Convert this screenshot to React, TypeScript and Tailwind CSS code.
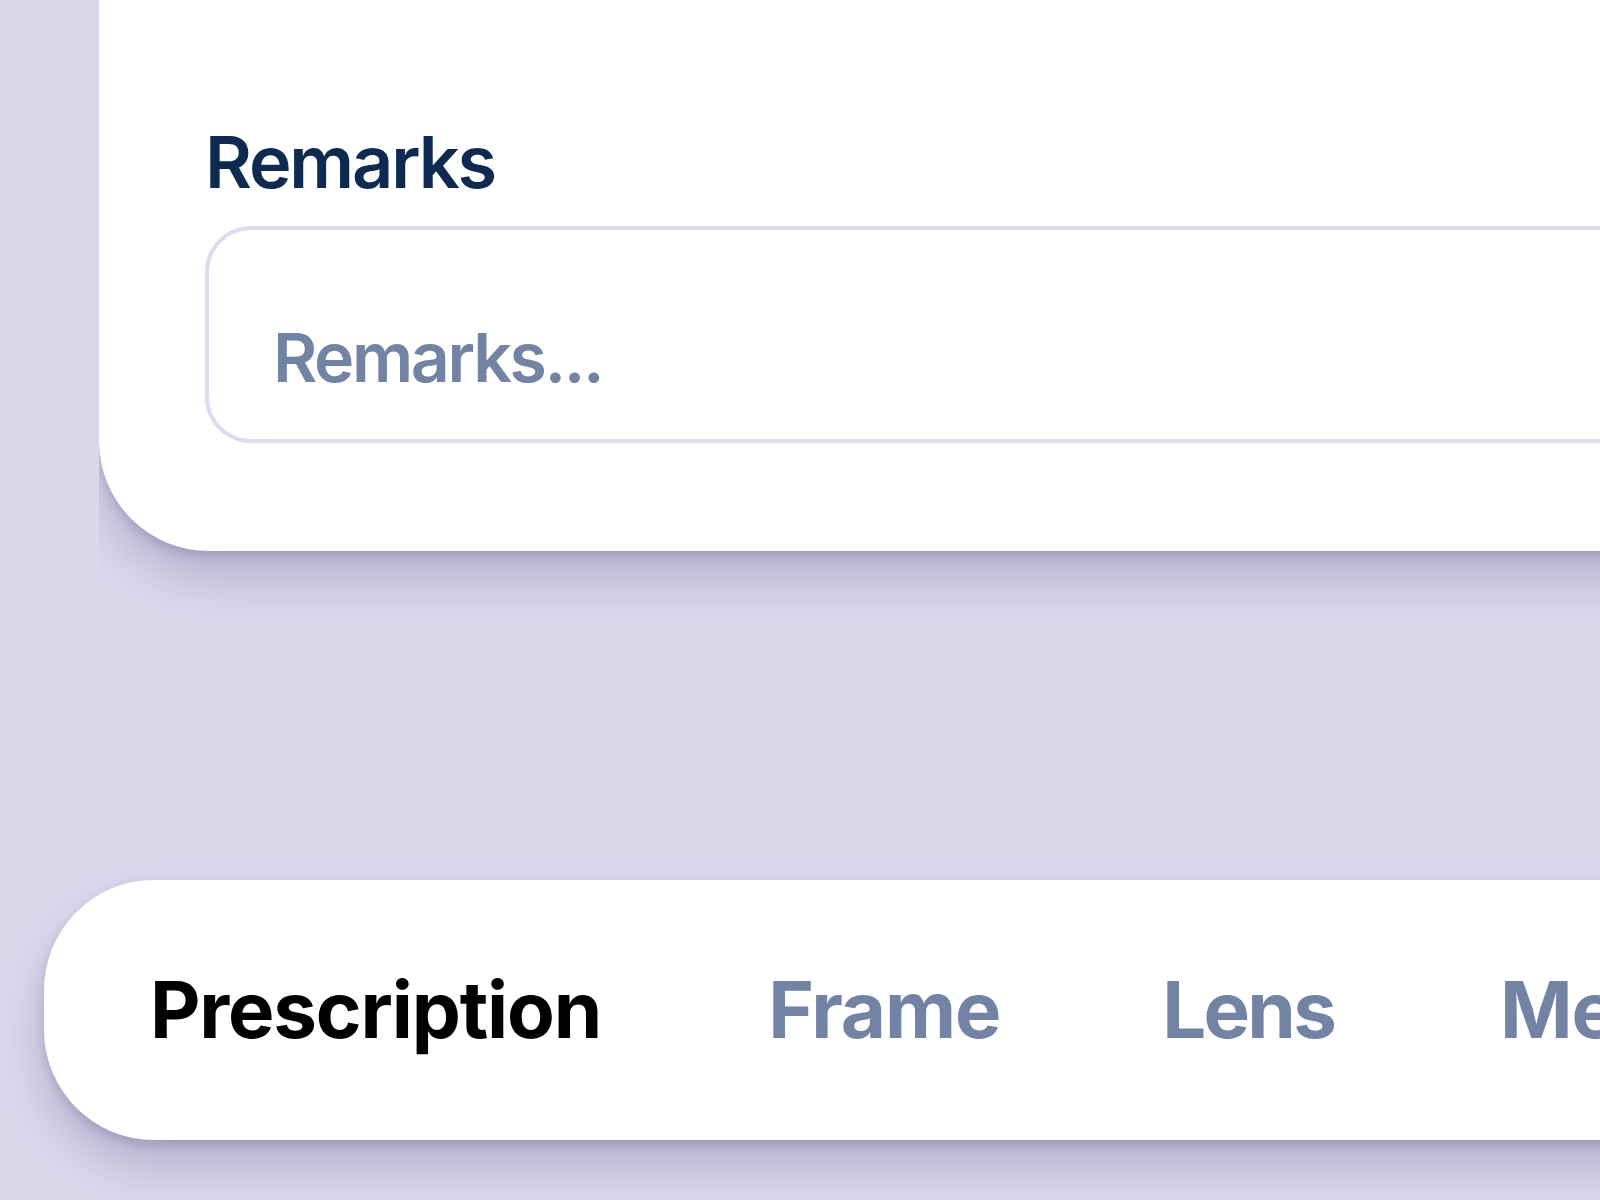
// Per-tab spacing is hand-tuned to the mock; class strings are written out in full.
const TABS = [
  { label: 'Prescription', cls: 'tracking-[-0.015em]' },
  { label: 'Frame', cls: 'ml-[167px] tracking-[-0.015em]' },
  { label: 'Lens', cls: 'ml-[162px] tracking-[-0.035em]' },
  { label: 'Measurements', cls: 'ml-[166px] tracking-[-0.015em]' },
];

// Zoomed-in order form: remarks card on top, tab bar pinned below.
export default function App() {
  return (
    <div
      className="flex h-[1200px] w-[1600px] flex-col overflow-hidden bg-[#dcd8ec]"
      style={{ fontFamily: 'Inter, "Noto Sans", sans-serif' }}
    >
      {/* clip wrapper gives the card shadow its hard left edge */}
      <div className="ml-[99px] overflow-hidden pb-[140px]">
        <div className="w-[1600px] rounded-bl-[110px] bg-white pl-[106px] pt-[126px] pb-[108px] shadow-[0_6px_10px_rgba(60,55,100,0.18),0_26px_50px_rgba(70,62,120,0.26)]">
          <label
            htmlFor="remarks"
            className="block text-[72px] font-semibold leading-none tracking-[-0.03em] text-[#0e2a50]"
          >
            Remarks
          </label>
          <textarea
            id="remarks"
            placeholder="Remarks..."
            className="mt-[28px] block h-[217px] w-[1600px] resize-none rounded-[46px] border-4 border-[#dedaf0] bg-white pl-[64px] pt-[93px] text-[68px] font-semibold leading-none tracking-[-0.035em] text-[#0e2a50] outline-none placeholder:text-[#7383a3]"
          />
        </div>
      </div>

      <nav className="mt-[189px] ml-[44px] flex h-[260px] w-[1700px] shrink-0 items-center rounded-l-[110px] bg-white pl-[106px] shadow-[0_6px_10px_rgba(60,55,100,0.18),0_26px_50px_rgba(70,62,120,0.26)]">
        {TABS.map((tab, i) => (
          <button
            key={tab.label}
            type="button"
            className={`shrink-0 text-[78px] font-bold leading-none ${tab.cls} ${
              i === 0 ? 'text-black' : 'text-[#7383a3]'
            }`}
          >
            {tab.label}
          </button>
        ))}
      </nav>
    </div>
  );
}
